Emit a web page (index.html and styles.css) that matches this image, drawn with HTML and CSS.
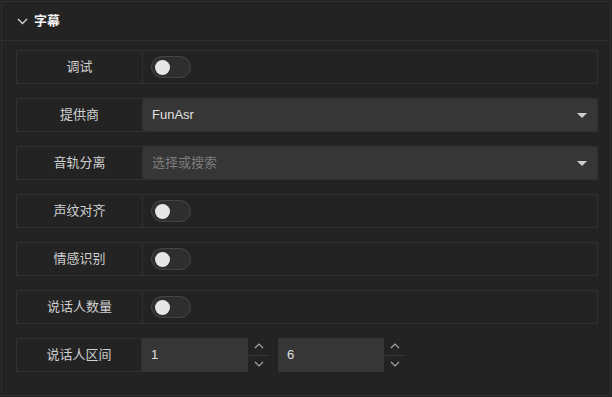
FILE: index.html
```html
<!DOCTYPE html>
<html lang="zh">
<head>
<meta charset="utf-8">
<title>字幕</title>
<link rel="stylesheet" href="styles.css">
</head>
<body>
<section class="panel">
  <header class="panel-head">
    <svg class="chev" width="11" height="7" viewBox="0 0 11 7"><path d="M1 1 L5.5 5.5 L10 1" fill="none" stroke="#d8d8d8" stroke-width="1.3"/></svg>
    <span class="title">字幕</span>
  </header>
  <div class="panel-body">
    <div class="row bordered">
      <div class="label">调试</div>
      <div class="ctrl"><span class="toggle"><span class="knob"></span></span></div>
    </div>
    <div class="row bordered">
      <div class="label">提供商</div>
      <div class="select"><span class="value">FunAsr</span><span class="caret"></span></div>
    </div>
    <div class="row bordered">
      <div class="label">音轨分离</div>
      <div class="select"><span class="placeholder">选择或搜索</span><span class="caret"></span></div>
    </div>
    <div class="row bordered">
      <div class="label">声纹对齐</div>
      <div class="ctrl"><span class="toggle"><span class="knob"></span></span></div>
    </div>
    <div class="row bordered">
      <div class="label">情感识别</div>
      <div class="ctrl"><span class="toggle"><span class="knob"></span></span></div>
    </div>
    <div class="row bordered">
      <div class="label">说话人数量</div>
      <div class="ctrl"><span class="toggle"><span class="knob"></span></span></div>
    </div>
    <div class="row">
      <div class="label boxed">说话人区间</div>
      <div class="num">
        <div class="num-input">1</div>
        <div class="spin">
          <span class="spin-btn"><svg width="10" height="6" viewBox="0 0 10 6"><path d="M1 5 L5 1 L9 5" fill="none" stroke="#a8a8a8" stroke-width="1.1"/></svg></span>
          <span class="spin-btn down"><svg width="10" height="6" viewBox="0 0 10 6"><path d="M1 1 L5 5 L9 1" fill="none" stroke="#a8a8a8" stroke-width="1.1"/></svg></span>
        </div>
      </div>
      <div class="num">
        <div class="num-input">6</div>
        <div class="spin">
          <span class="spin-btn"><svg width="10" height="6" viewBox="0 0 10 6"><path d="M1 5 L5 1 L9 5" fill="none" stroke="#a8a8a8" stroke-width="1.1"/></svg></span>
          <span class="spin-btn down"><svg width="10" height="6" viewBox="0 0 10 6"><path d="M1 1 L5 5 L9 1" fill="none" stroke="#a8a8a8" stroke-width="1.1"/></svg></span>
        </div>
      </div>
    </div>
  </div>
</section>
</body>
</html>
```

FILE: styles.css
```css
html, body {
  margin: 0;
  padding: 0;
  background: #232323;
}
body {
  padding: 1px;
  font-family: "Liberation Sans", "Noto Sans CJK SC", sans-serif;
  font-size: 13px;
  color: #d2d2d2;
}
.panel {
  width: 608px;
  height: 393px;
  border: 1px solid #303030;
  background: #232323;
}
.panel-head {
  height: 38px;
  border-bottom: 1px solid #303030;
  display: flex;
  align-items: center;
  padding-left: 15px;
}
.chev {
  display: block;
  margin-right: 6px;
  margin-top: 1px;
}
.title {
  color: #f2f2f2;
  font-weight: bold;
  font-size: 13px;
  line-height: 16px;
}
.panel-body {
  padding: 9px 12px 0 14px;
  display: flex;
  flex-direction: column;
  gap: 14px;
}
.row {
  display: flex;
  height: 34px;
  box-sizing: border-box;
}
.row.bordered {
  border: 1px solid #303030;
}
.label {
  width: 125px;
  flex: none;
  border-right: 1px solid #303030;
  display: flex;
  align-items: center;
  justify-content: center;
  line-height: 16px;
  color: #d0d0d0;
}
.label.boxed {
  width: 126px;
  box-sizing: border-box;
  border: 1px solid #303030;
}
.ctrl {
  flex: 1;
  display: flex;
  align-items: center;
  padding-left: 8px;
}
.toggle {
  box-sizing: border-box;
  width: 40px;
  height: 22px;
  border: 1px solid #454545;
  border-radius: 11px;
  background: #2e2e2e;
  display: flex;
  align-items: center;
  padding-left: 3px;
}
.knob {
  width: 15px;
  height: 15px;
  border-radius: 50%;
  background: #e6e6e6;
}
.select {
  flex: 1;
  background: #363636;
  display: flex;
  align-items: center;
  justify-content: space-between;
  padding: 0 10px 0 9px;
  border-radius: 2px;
}
.value {
  color: #e0e0e0;
  line-height: 16px;
}
.placeholder {
  color: #7c7c7c;
  line-height: 16px;
}
.caret {
  width: 0;
  height: 0;
  border-left: 5px solid transparent;
  border-right: 5px solid transparent;
  border-top: 5px solid #cfcfcf;
}
.num {
  display: flex;
  margin-right: 9px;
}
.num-input {
  width: 97px;
  background: #363636;
  display: flex;
  align-items: center;
  padding-left: 9px;
  color: #e0e0e0;
  line-height: 16px;
}
.spin {
  width: 20px;
  margin-left: 1px;
  display: flex;
  flex-direction: column;
}
.spin-btn {
  flex: 1;
  display: flex;
  align-items: center;
  justify-content: center;
}
.spin-btn.down {
  border-top: 1px solid #3a3a3a;
}
.spin-btn svg {
  display: block;
}
```
